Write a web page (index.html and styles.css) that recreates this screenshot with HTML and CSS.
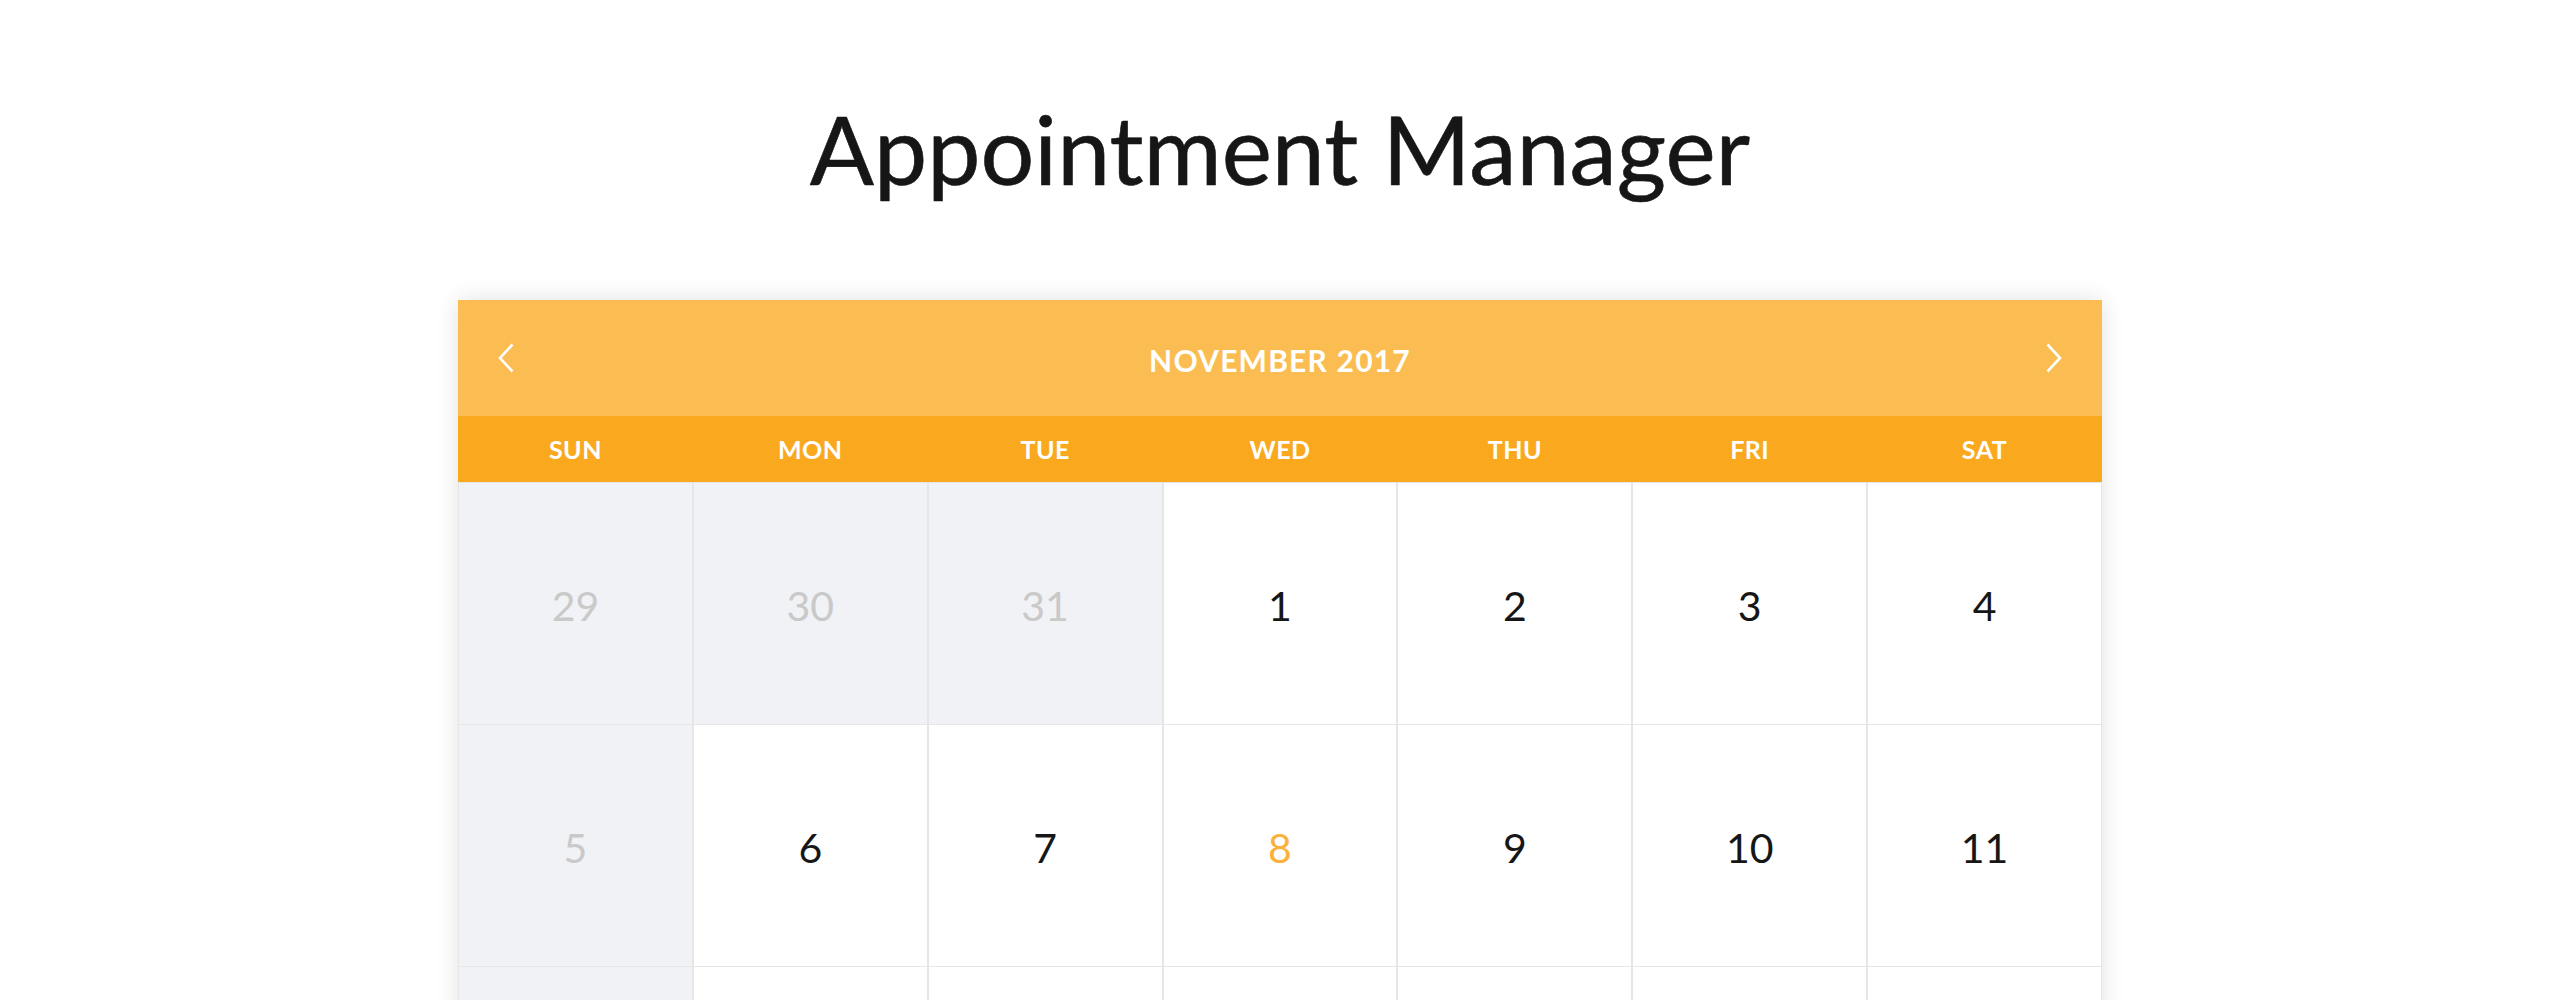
FILE: index.html
```html
<!DOCTYPE html>
<html lang="en">
<head>
<meta charset="utf-8">
<title>Appointment Manager</title>
<link rel="stylesheet" href="styles.css">
</head>
<body>
  <h1 class="page-title">Appointment Manager</h1>

  <section class="calendar">
    <header class="cal-head">
      <button class="nav-btn" aria-label="Previous month">
        <svg width="16" height="30" viewBox="0 0 16 30"><polyline points="14.5,1.5 2,15 14.5,28.5" fill="none" stroke="#fff" stroke-width="2.6"/></svg>
      </button>
      <div class="month">NOVEMBER 2017</div>
      <button class="nav-btn" aria-label="Next month">
        <svg width="16" height="30" viewBox="0 0 16 30"><polyline points="1.5,1.5 14,15 1.5,28.5" fill="none" stroke="#fff" stroke-width="2.6"/></svg>
      </button>
    </header>

    <div class="weekdays">
      <div>SUN</div><div>MON</div><div>TUE</div><div>WED</div><div>THU</div><div>FRI</div><div>SAT</div>
    </div>

    <div class="days">
      <div class="day off">29</div>
      <div class="day off">30</div>
      <div class="day off">31</div>
      <div class="day">1</div>
      <div class="day">2</div>
      <div class="day">3</div>
      <div class="day">4</div>

      <div class="day off">5</div>
      <div class="day">6</div>
      <div class="day">7</div>
      <div class="day today">8</div>
      <div class="day">9</div>
      <div class="day">10</div>
      <div class="day">11</div>

      <div class="day off">12</div>
      <div class="day">13</div>
      <div class="day">14</div>
      <div class="day">15</div>
      <div class="day">16</div>
      <div class="day">17</div>
      <div class="day">18</div>

      <div class="day off">19</div>
      <div class="day">20</div>
      <div class="day">21</div>
      <div class="day">22</div>
      <div class="day">23</div>
      <div class="day">24</div>
      <div class="day">25</div>

      <div class="day off">26</div>
      <div class="day">27</div>
      <div class="day">28</div>
      <div class="day">29</div>
      <div class="day">30</div>
      <div class="day off">1</div>
      <div class="day off">2</div>
    </div>
  </section>
</body>
</html>
```

FILE: styles.css
```css
html, body {
  margin: 0;
  padding: 0;
  background: #ffffff;
}

body {
  font-family: "Lato", "Open Sans", sans-serif;
  color: #161616;
  padding-top: 93px;
  padding-bottom: 80px;
}

.page-title {
  margin: 0;
  text-align: center;
  font-family: "Lato", sans-serif;
  font-weight: 400;
  font-size: 95px;
  line-height: 110px;
  letter-spacing: 0;
  color: #161616;
  -webkit-text-stroke: 0.6px #161616;
}

.calendar {
  width: 1644px;
  margin: 97px auto 0;
  background: #ffffff;
  box-shadow: 0 0 22px rgba(0, 0, 0, 0.12);
}

.cal-head {
  height: 116px;
  background: #fbbd51;
  display: flex;
  align-items: center;
  justify-content: space-between;
  padding: 0 40px;
}

.nav-btn {
  border: 0;
  background: transparent;
  padding: 0;
  width: 16px;
  height: 30px;
  display: flex;
  cursor: pointer;
}

.month {
  color: #ffffff;
  font-weight: 700;
  font-size: 30px;
  letter-spacing: 1.2px;
  padding-top: 4px;
}

.weekdays {
  height: 66px;
  background: #faa91f;
  display: grid;
  grid-template-columns: repeat(7, 1fr);
  align-items: center;
  text-align: center;
  color: #ffffff;
  font-weight: 700;
  font-size: 25px;
  letter-spacing: 0.5px;
}

.days {
  display: grid;
  grid-template-columns: repeat(7, 1fr);
  border-top: 1px solid #e6e6e6;
}

.day {
  height: 242px;
  padding-top: 3px;
  box-sizing: border-box;
  display: flex;
  align-items: center;
  justify-content: center;
  border-left: 1px solid #e6e6e6;
  border-right: 1px solid #e6e6e6;
  border-bottom: 1px solid #e6e6e6;
  font-size: 41px;
  font-weight: 400;
  color: #161616;
  background: #ffffff;
}

.day.off {
  background: #f1f2f6;
  color: #c9c9c9;
}

.day.today {
  color: #fbb13c;
}
```
